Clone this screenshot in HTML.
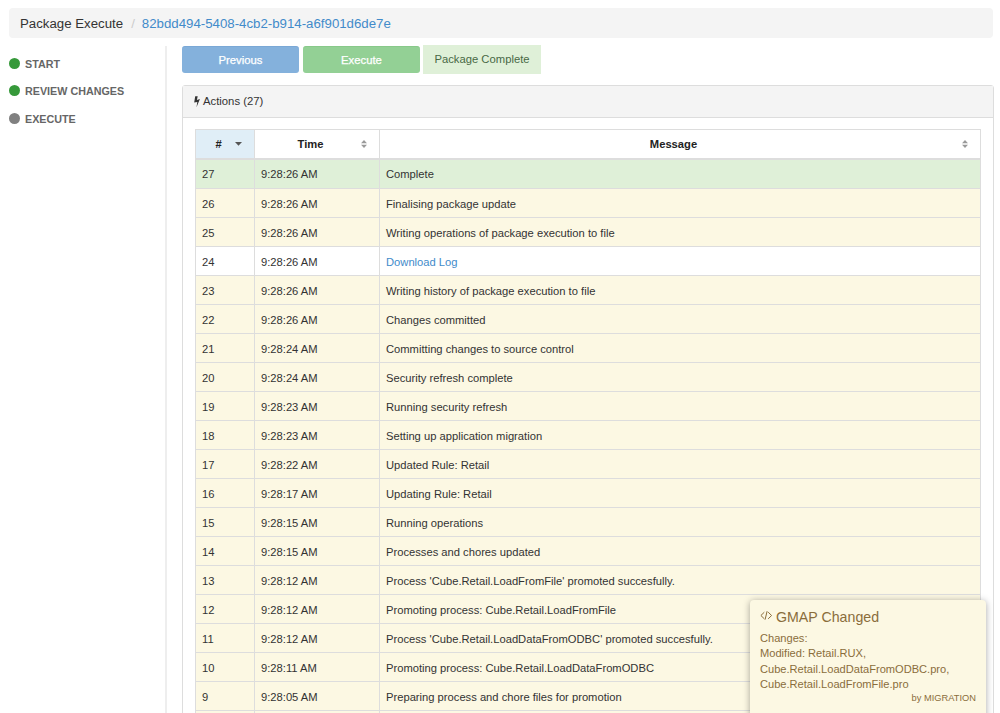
<!DOCTYPE html>
<html><head><meta charset="utf-8">
<style>
*{box-sizing:border-box;margin:0;padding:0}
html,body{width:1000px;height:713px;overflow:hidden;background:#fff;font-family:"Liberation Sans",sans-serif;color:#333}
.bc{position:absolute;left:9px;top:8px;width:984px;height:30px;background:#f4f4f4;border-radius:4px;font-size:13.25px;line-height:30px;padding-left:11px;padding-top:0.5px;color:#333;white-space:nowrap}
.bc .sep{color:#ccc;padding:0 7px 0 8px}
.step{position:absolute;height:12px;white-space:nowrap;font-size:10.75px;font-weight:bold;color:#666}
.dot{position:absolute;left:0;width:11px;height:11px;border-radius:50%}
.vline{position:absolute;left:165px;top:46px;width:2px;height:700px;background:#eee}
.btn{position:absolute;top:46px;height:27px;width:117px;border-radius:3px;color:#fff;font-size:11.3px;-webkit-text-stroke:0.25px #fff;text-align:center;line-height:27px;padding-top:1px}
.panel{position:absolute;left:182px;top:85px;width:812px;height:700px;border:1px solid #ddd;border-radius:3px}
.ph{position:relative;height:32px;background:#f4f4f4;border-bottom:1px solid #ddd;font-size:11.3px;line-height:31px;padding-left:20px}
table{position:absolute;left:12px;top:43px;width:786px;border-collapse:collapse;font-size:11.2px;table-layout:fixed}
td,th{border:1px solid #ddd;height:29px;padding:1px 6px 0;text-align:left;white-space:nowrap}
th{position:relative;text-align:center;font-weight:bold;border-bottom:2px solid #ddd;padding-right:19px;color:#222}
.si{position:absolute;right:12px;top:10px}
.ci{position:absolute;right:12px;top:12px}
tr.s td{background:#dff0d8;height:30px}
tr.w td{background:#fcf8e3}
a{color:#428bca;text-decoration:none}
.pop{position:absolute;left:750px;top:600px;width:236px;height:130px;background:#fcf8e3;border-radius:4px;box-shadow:0 1px 7px rgba(0,0,0,.35);color:#8a6d3b}
</style></head><body>
<div class="bc">Package Execute<span class="sep">/</span><a>82bdd494-5408-4cb2-b914-a6f901d6de7e</a></div>
<div class="step" style="top:58px;left:9px"><span class="dot" style="background:#36993a"></span><span style="position:absolute;left:16px">START</span></div>
<div class="step" style="top:85px;left:9px"><span class="dot" style="background:#36993a"></span><span style="position:absolute;left:16px">REVIEW CHANGES</span></div>
<div class="step" style="top:113px;left:9px"><span class="dot" style="background:#808080"></span><span style="position:absolute;left:16px">EXECUTE</span></div>
<div class="vline"></div>
<div class="btn" style="left:182px;background:#84b1dc;border-top:1px solid #7aa8d6;line-height:25px">Previous</div>
<div class="btn" style="left:303px;background:#93d095;border-top:1px solid #88c98a;line-height:25px">Execute</div>
<div class="btn" style="left:423px;top:45px;height:29px;width:118px;background:#dff0d8;color:#486845;-webkit-text-stroke:0;border-radius:0;line-height:27px;font-size:11.25px">Package Complete</div>
<div class="panel">
<div class="ph"><svg width="7" height="12" viewBox="0 0 7 12" style="position:absolute;left:11px;top:10px"><path d="M1.2 0.3L3.7 0.3L2.9 3.9L5.9 3.1L2.5 11.2L3.3 6.0L0.2 6.5Z" fill="#333"/></svg>Actions (27)</div>
<table>
<colgroup><col style="width:59px"><col style="width:125px"><col></colgroup>
<thead><tr><th style="background:#e0eef7">#<svg class="ci" width="7" height="4" viewBox="0 0 7 4"><path d="M0 0L7 0L3.5 3.8Z" fill="#555"/></svg></th><th>Time<svg class="si" width="6" height="8" viewBox="0 0 6 8"><path d="M0 3.2L3 0L6 3.2Z M0 4.8L3 8L6 4.8Z" fill="#9a9a9a"/></svg></th><th>Message<svg class="si" width="6" height="8" viewBox="0 0 6 8"><path d="M0 3.2L3 0L6 3.2Z M0 4.8L3 8L6 4.8Z" fill="#9a9a9a"/></svg></th></tr></thead>
<tbody>
<tr class="s"><td>27</td><td>9:28:26 AM</td><td>Complete</td></tr>
<tr class="w"><td>26</td><td>9:28:26 AM</td><td>Finalising package update</td></tr>
<tr class="w"><td>25</td><td>9:28:26 AM</td><td>Writing operations of package execution to file</td></tr>
<tr class=""><td>24</td><td>9:28:26 AM</td><td><a>Download Log</a></td></tr>
<tr class="w"><td>23</td><td>9:28:26 AM</td><td>Writing history of package execution to file</td></tr>
<tr class="w"><td>22</td><td>9:28:26 AM</td><td>Changes committed</td></tr>
<tr class="w"><td>21</td><td>9:28:24 AM</td><td>Committing changes to source control</td></tr>
<tr class="w"><td>20</td><td>9:28:24 AM</td><td>Security refresh complete</td></tr>
<tr class="w"><td>19</td><td>9:28:23 AM</td><td>Running security refresh</td></tr>
<tr class="w"><td>18</td><td>9:28:23 AM</td><td>Setting up application migration</td></tr>
<tr class="w"><td>17</td><td>9:28:22 AM</td><td>Updated Rule: Retail</td></tr>
<tr class="w"><td>16</td><td>9:28:17 AM</td><td>Updating Rule: Retail</td></tr>
<tr class="w"><td>15</td><td>9:28:15 AM</td><td>Running operations</td></tr>
<tr class="w"><td>14</td><td>9:28:15 AM</td><td>Processes and chores updated</td></tr>
<tr class="w"><td>13</td><td>9:28:12 AM</td><td>Process 'Cube.Retail.LoadFromFile' promoted succesfully.</td></tr>
<tr class="w"><td>12</td><td>9:28:12 AM</td><td>Promoting process: Cube.Retail.LoadFromFile</td></tr>
<tr class="w"><td>11</td><td>9:28:12 AM</td><td>Process 'Cube.Retail.LoadDataFromODBC' promoted succesfully.</td></tr>
<tr class="w"><td>10</td><td>9:28:11 AM</td><td>Promoting process: Cube.Retail.LoadDataFromODBC</td></tr>
<tr class="w"><td>9</td><td>9:28:05 AM</td><td>Preparing process and chore files for promotion</td></tr>
<tr class="w"><td>8</td><td>9:28:05 AM</td><td>Preparing</td></tr>
</tbody></table>
</div>
<div class="pop">
<svg width="13" height="10" viewBox="0 0 13 10" style="position:absolute;left:10px;top:11px"><path d="M4.3 1.2L0.9 4.5L4.3 7.8 M8.2 1.2L11.6 4.5L8.2 7.8 M7.1 0.2L5.1 8.6" stroke="#8a6d3b" stroke-width="1" fill="none"/></svg>
<div style="position:absolute;left:26px;top:8.5px;font-size:14.2px;white-space:nowrap">GMAP Changed</div>
<div style="position:absolute;left:10px;top:30.5px;font-size:11.1px;line-height:15.6px;white-space:nowrap">Changes:<br>Modified: Retail.RUX,<br>Cube.Retail.LoadDataFromODBC.pro,<br>Cube.Retail.LoadFromFile.pro</div>
<div style="position:absolute;right:10px;top:92.5px;font-size:9.3px;white-space:nowrap">by MIGRATION</div>
</div>
</body></html>
